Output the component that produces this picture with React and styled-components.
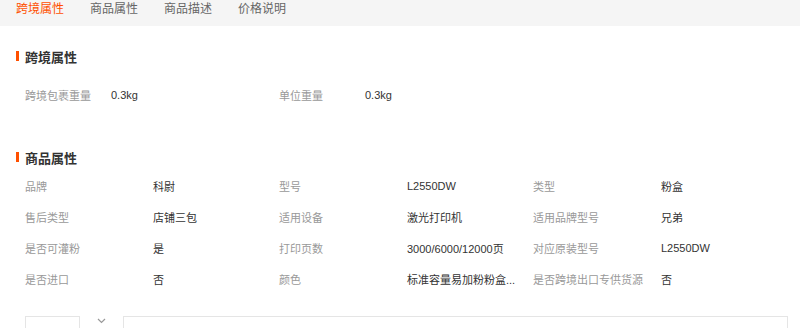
import React from "react";
import styled, { createGlobalStyle } from "styled-components";

const GlobalStyle = createGlobalStyle`
  body {
    margin: 0;
    background: #fff;
    font-family: "Liberation Sans", "Noto Sans CJK SC", sans-serif;
    font-size: 12px;
    color: #333;
  }
`;

const Page = styled.div`
  width: 800px;
  height: 328px;
  overflow: hidden;
`;

const TabBar = styled.div`
  display: flex;
  gap: 26px;
  height: 26px;
  padding-left: 16px;
  background: #f5f5f5;
`;

const Tab = styled.div`
  font-size: 12px;
  line-height: 19px;
  color: ${(p) => (p.$active ? "#ff5000" : "#666")};
`;

const Section = styled.section`
  padding-top: ${(p) => p.$top}px;
`;

const Heading = styled.h3`
  display: flex;
  align-items: center;
  gap: 6px;
  margin: 0 0 ${(p) => p.$gap}px 16px;
  height: 20px;
  font-size: 13px;
  font-weight: bold;
  color: #333;

  &::before {
    content: "";
    width: 3px;
    height: 10px;
    background: #ff5000;
  }
`;

const Grid = styled.div`
  display: grid;
  grid-template-columns: repeat(${(p) => p.$cols}, 254px);
  padding-left: 25px;
  font-size: 11px;
`;

const Item = styled.div`
  display: flex;
  align-items: center;
  height: 31px;
`;

const Label = styled.span`
  flex: none;
  width: ${(p) => p.$width}px;
  color: #999;
  white-space: nowrap;
`;

const Value = styled.span`
  color: #333;
  white-space: nowrap;
`;

const Footer = styled.div`
  display: flex;
  align-items: flex-start;
  margin-top: 22px;
  padding-left: 25px;
`;

const Box = styled.div`
  flex: ${(p) => (p.$grow ? 1 : "none")};
  width: ${(p) => (p.$grow ? "auto" : "53px")};
  margin-right: ${(p) => (p.$grow ? "12px" : "0")};
  height: 30px;
  border: 1px solid #e5e5e5;
  border-bottom: none;
`;

const Toggle = styled.div`
  display: flex;
  justify-content: center;
  width: 43px;
  padding-top: 2px;
  color: #999;
`;

const cross = [
  ["跨境包裹重量", "0.3kg"],
  ["单位重量", "0.3kg"],
];

const attrs = [
  ["品牌", "科尉"],
  ["型号", "L2550DW"],
  ["类型", "粉盒"],
  ["售后类型", "店铺三包"],
  ["适用设备", "激光打印机"],
  ["适用品牌型号", "兄弟"],
  ["是否可灌粉", "是"],
  ["打印页数", "3000/6000/12000页"],
  ["对应原装型号", "L2550DW"],
  ["是否进口", "否"],
  ["颜色", "标准容量易加粉粉盒..."],
  ["是否跨境出口专供货源", "否"],
];

export default function App() {
  return (
    <Page>
      <GlobalStyle />
      <TabBar>
        <Tab $active>跨境属性</Tab>
        <Tab>商品属性</Tab>
        <Tab>商品描述</Tab>
        <Tab>价格说明</Tab>
      </TabBar>

      <Section $top={20}>
        <Heading $gap={13}>跨境属性</Heading>
        <Grid $cols={2}>
          {cross.map(([k, v]) => (
            <Item key={k}>
              <Label $width={86}>{k}</Label>
              <Value>{v}</Value>
            </Item>
          ))}
        </Grid>
      </Section>

      <Section $top={37}>
        <Heading $gap={3}>商品属性</Heading>
        <Grid $cols={3}>
          {attrs.map(([k, v]) => (
            <Item key={k}>
              <Label $width={128}>{k}</Label>
              <Value>{v}</Value>
            </Item>
          ))}
        </Grid>
      </Section>

      <Footer>
        <Box />
        <Toggle>
          <svg width="9" height="6" viewBox="0 0 9 6">
            <path d="M1 1l3.5 3.5L8 1" fill="none" stroke="#999" strokeWidth="1.2" />
          </svg>
        </Toggle>
        <Box $grow />
      </Footer>
    </Page>
  );
}
